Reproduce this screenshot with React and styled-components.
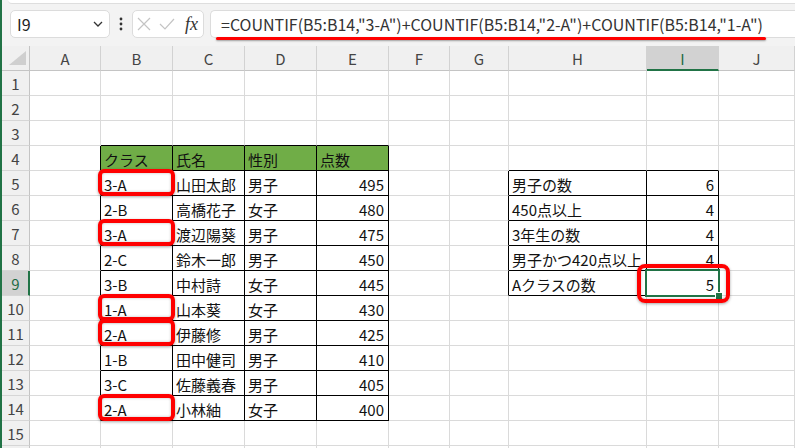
import React from 'react'
import styled, { createGlobalStyle } from 'styled-components'

const font = `"Noto Sans CJK JP", "Noto Sans", sans-serif`
const green = '#217346'
const gridLine = '#dadada'

const GlobalStyle = createGlobalStyle`
    html, body { margin: 0; padding: 0; background: #fff; }
    body { font-family: ${font}; }
`

const Window = styled.div`
    width: 795px;
    height: 448px;
    overflow: hidden;
    box-sizing: border-box;
    border-left: 2px solid ${green};
    background: #f3f3f3;
`

const TopStrip = styled.div`
    height: 3px;
    margin-left: 6px;
    background: #fff;
    border-bottom: 1px solid #dedede;
    border-bottom-left-radius: 6px;
`

const FormulaBar = styled.div`
    display: flex;
    align-items: center;
    height: 28px;
    padding: 6px 0 8px 8px;
`

const Box = styled.div`
    box-sizing: border-box;
    height: 28px;
    background: #fff;
    border: 1px solid #dcdcdc;
    border-radius: 5px;
    display: flex;
    align-items: center;
`

const NameBox = styled(Box)`
    width: 100px;
    padding: 0 6px 0 6px;
    justify-content: space-between;
    font-size: 16px;
    color: #222;
`

const Dots = styled.div`
    width: 22px;
    display: flex;
    justify-content: center;
`

const FxBox = styled(Box)`
    width: 72px;
    padding: 0 4px 0 4px;
    gap: 8px;
`

const FxLabel = styled.span`
    font-family: "Liberation Serif", serif;
    font-style: italic;
    font-size: 18px;
    color: #333;
    margin-left: 2px;
`

const FormulaField = styled(Box)`
    flex: 1;
    margin-left: 6px;
    padding-left: 10px;
    border-right: none;
    border-radius: 5px 0 0 5px;
    font-size: 16px;
    color: #333;
    white-space: nowrap;
`

const FormulaText = styled.span`
    position: relative;
    &::after {
        content: '';
        position: absolute;
        left: -5px;
        right: -3px;
        bottom: -4px;
        height: 3px;
        background: #f00;
        border-radius: 2px;
        box-shadow: 0 1px 2px rgba(0, 0, 0, 0.35);
    }
`

const Sheet = styled.div`
    display: grid;
    grid-template-columns: 28px 71px 72px 72px 72px 72px 61px 59px 138px 72px 1fr;
    grid-auto-rows: 25px;
    background: #fff;
`

const Corner = styled.div`
    box-sizing: border-box;
    background: #f0f0f0;
    border-right: 1px solid #c4c4c4;
    border-bottom: 1px solid #c4c4c4;
    display: flex;
    align-items: flex-end;
    justify-content: flex-end;
    padding: 0 3px 5px 0;
`

const ColHead = styled.div`
    box-sizing: border-box;
    background: ${p => p.$active ? '#d2d2d2' : '#f0f0f0'};
    border-right: 1px solid #d2d2d2;
    border-bottom: ${p => p.$active ? `2px solid ${green}` : '1px solid #c4c4c4'};
    color: ${p => p.$active ? '#1d6b44' : '#444'};
    font-size: 15px;
    display: flex;
    align-items: center;
    justify-content: center;
    padding-top: ${p => p.$active ? '1px' : '0'};
`

const RowHead = styled.div`
    box-sizing: border-box;
    background: ${p => p.$active ? '#d2d2d2' : '#f0f0f0'};
    border-right: ${p => p.$active ? `2px solid ${green}` : '1px solid #c4c4c4'};
    border-bottom: 1px solid #d6d6d6;
    color: ${p => p.$active ? '#1d6b44' : '#444'};
    font-size: 15px;
    display: flex;
    align-items: center;
    justify-content: center;
    padding-left: ${p => p.$active ? '1px' : '0'};
`

const Cell = styled.div`
    position: relative;
    box-sizing: border-box;
    background: ${p => p.$fill || '#fff'};
    border-right: 1px solid ${p => p.$right ? '#000' : gridLine};
    border-bottom: 1px solid ${p => p.$bottom ? '#000' : gridLine};
    font-size: 15px;
    color: #111;
    white-space: nowrap;
    display: flex;
    align-items: center;
    justify-content: ${p => p.$num ? 'flex-end' : 'flex-start'};
    padding: 2px 4px 0 3px;
`

const Marker = styled.div`
    position: absolute;
    z-index: 3;
    top: ${p => p.$wide ? '-7px' : '-2px'};
    left: ${p => p.$wide ? '-10px' : '-3px'};
    right: ${p => p.$wide ? '-12px' : '-3px'};
    bottom: ${p => p.$wide ? '-8px' : '-1px'};
    border: 4px solid #f00;
    border-radius: ${p => p.$wide ? '8px' : '6px'};
    box-shadow: 0 1px 3px rgba(0, 0, 0, 0.35), inset 0 0 3px rgba(0, 0, 0, 0.25);
    pointer-events: none;
`

const Selection = styled.div`
    position: absolute;
    z-index: 2;
    inset: -2px;
    border: 2px solid ${green};
`

const Handle = styled.div`
    position: absolute;
    right: -4px;
    bottom: -4px;
    width: 6px;
    height: 6px;
    background: ${green};
    border: 1px solid #fff;
    border-right: none;
    border-bottom: none;
`

const COLS = ['A', 'B', 'C', 'D', 'E', 'F', 'G', 'H', 'I', 'J']
const ROWS = 15
const SELECTED = { r: 9, c: 9 }

const students = [
    ['3-A', '山田太郎', '男子', 495, true],
    ['2-B', '高橋花子', '女子', 480],
    ['3-A', '渡辺陽葵', '男子', 475, true],
    ['2-C', '鈴木一郎', '男子', 450],
    ['3-B', '中村詩', '女子', 445],
    ['1-A', '山本葵', '女子', 430, true],
    ['2-A', '伊藤修', '男子', 425, true],
    ['1-B', '田中健司', '男子', 410],
    ['3-C', '佐藤義春', '男子', 405],
    ['2-A', '小林紬', '女子', 400, true],
]

const summary = [
    ['男子の数', 6],
    ['450点以上', 4],
    ['3年生の数', 4],
    ['男子かつ420点以上', 4],
    ['Aクラスの数', 5],
]

const cells = {}
;['クラス', '氏名', '性別', '点数'].forEach((t, i) => {
    cells[`4-${i + 2}`] = { text: t, fill: '#70ad47' }
})
students.forEach((s, i) => {
    const r = 5 + i
    cells[`${r}-2`] = { text: s[0], mark: s[4] }
    cells[`${r}-3`] = { text: s[1] }
    cells[`${r}-4`] = { text: s[2] }
    cells[`${r}-5`] = { text: s[3], num: true }
})
summary.forEach((s, i) => {
    const r = 5 + i
    cells[`${r}-8`] = { text: s[0] }
    cells[`${r}-9`] = { text: s[1], num: true, markWide: r === 9 }
})

const inTable = (r, c) => (r >= 4 && r <= 14 && c >= 2 && c <= 5) || (r >= 5 && r <= 9 && c >= 8 && c <= 9)

const Chevron = () => (
    <svg width="10" height="6" viewBox="0 0 10 6"><path d="M1 1l4 4 4-4" fill="none" stroke="#333" strokeWidth="1.3" /></svg>
)

const VDots = () => (
    <svg width="4" height="14" viewBox="0 0 4 14">
        <circle cx="2" cy="2" r="1.4" fill="#333" />
        <circle cx="2" cy="7" r="1.4" fill="#333" />
        <circle cx="2" cy="12" r="1.4" fill="#333" />
    </svg>
)

const Cross = () => (
    <svg width="14" height="14" viewBox="0 0 14 14"><path d="M1 1l12 12M13 1L1 13" stroke="#c4c4c4" strokeWidth="1.2" /></svg>
)

const Check = () => (
    <svg width="16" height="12" viewBox="0 0 16 12"><path d="M1 6l5 5L15 1" fill="none" stroke="#c4c4c4" strokeWidth="1.2" /></svg>
)

const CornerTriangle = () => (
    <svg width="17" height="14" viewBox="0 0 17 14"><path d="M17 0v14H0z" fill="#cfcfcf" /></svg>
)

const SheetRow = ({ r, label = r }) => (
    <>
        <RowHead $active={r === SELECTED.r}>{label}</RowHead>
        {[...COLS.keys()].map(i => {
            const c = i + 1
            const cell = cells[`${r}-${c}`] || {}
            const selected = r === SELECTED.r && c === SELECTED.c
            return (
                <Cell
                    key={c}
                    $fill={cell.fill}
                    $num={cell.num}
                    $right={inTable(r, c) || inTable(r, c + 1)}
                    $bottom={inTable(r, c) || inTable(r + 1, c)}
                >
                    {cell.text}
                    {selected && <Selection><Handle /></Selection>}
                    {cell.mark && <Marker />}
                    {cell.markWide && <Marker $wide />}
                </Cell>
            )
        })}
    </>
)

export default function App() {
    return (
        <Window>
            <GlobalStyle />
            <TopStrip />
            <FormulaBar>
                <NameBox><span>I9</span><Chevron /></NameBox>
                <Dots><VDots /></Dots>
                <FxBox><Cross /><Check /><FxLabel>fx</FxLabel></FxBox>
                <FormulaField>
                    <FormulaText>=COUNTIF(B5:B14,"3-A")+COUNTIF(B5:B14,"2-A")+COUNTIF(B5:B14,"1-A")</FormulaText>
                </FormulaField>
            </FormulaBar>
            <Sheet>
                <Corner><CornerTriangle /></Corner>
                {COLS.map((l, i) => <ColHead key={l} $active={i + 1 === SELECTED.c}>{l}</ColHead>)}
                {Array.from({ length: ROWS }, (_, i) => <SheetRow key={i} r={i + 1} />)}
                <SheetRow r={ROWS + 1} label="" />
            </Sheet>
        </Window>
    )
}
